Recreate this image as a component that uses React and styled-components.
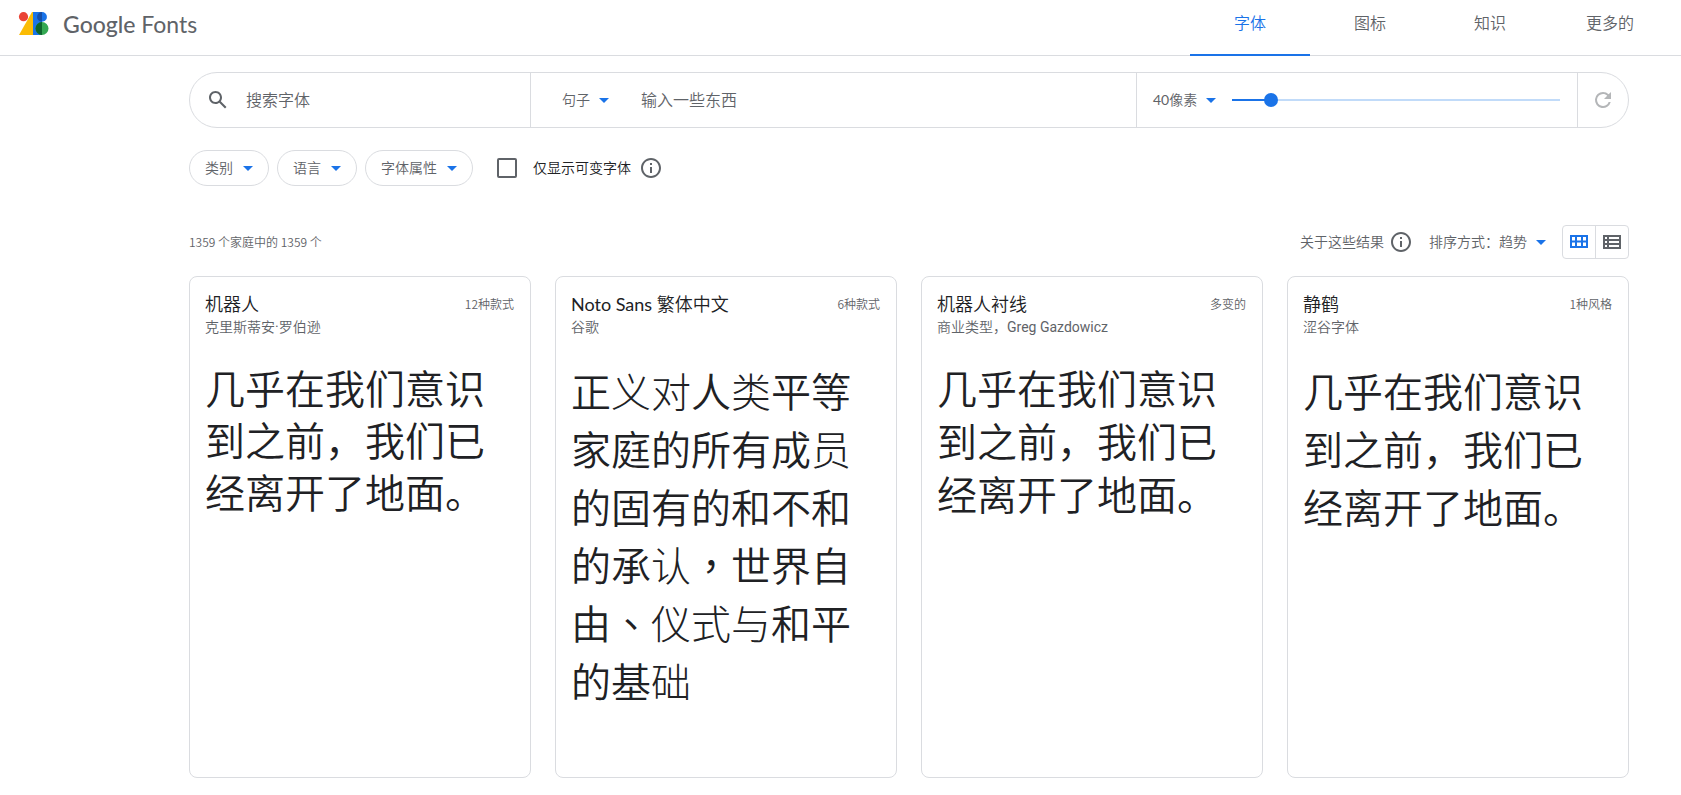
import React, { useState } from "react";
import styled, { createGlobalStyle, css } from "styled-components";

const GlobalStyle = createGlobalStyle`
* {
  box-sizing: border-box;
}
body {
  margin: 0;
  background: #fff;
  color: #202124;
  font-family: Lato, "Noto Sans CJK SC DemiLight", "Noto Sans CJK SC", sans-serif;
  font-size: 14px;
}
button, input {
  font-family: inherit;
}
`;

const Header = styled.header`
  display: flex;
  justify-content: space-between;
  height: 56px;
  padding: 0 11px 0 18px;
  border-bottom: 1px solid #dadce0;
`;

const Brand = styled.a`
  display: flex;
  align-items: center;
  gap: 14px;
  height: 48px;
  color: #5f6368;
  text-decoration: none;
`;

const BrandName = styled.span`
  font-size: 23px;
  line-height: 28px;

  b {
    font-weight: 500;
  }
`;

const Tabs = styled.nav`
  display: flex;
`;

const Tab = styled.a`
  width: 120px;
  height: 56px;
  padding-top: 11px;
  border-bottom: 2px solid transparent;
  color: #5f6368;
  font-size: 16px;
  font-weight: 350;
  line-height: 24px;
  text-align: center;
  text-decoration: none;

  ${props => props.$active && css`
    color: #1a73e8;
    border-bottom-color: #1a73e8;
  `}
`;

const Main = styled.main`
  padding: 16px 52px 17px 189px;
`;

const SearchBar = styled.form`
  display: flex;
  height: 56px;
  border: 1px solid #dadce0;
  border-radius: 28px;
`;

const Segment = styled.div`
  display: flex;
  align-items: center;
  flex: ${props => props.$flex || "1 1 0"};
  gap: ${props => props.$gap || 0}px;
  min-width: 0;
  padding: ${props => props.$pad};

  & + & {
    border-left: 1px solid #dadce0;
  }
`;

const TextInput = styled.input`
  flex: 1;
  min-width: 0;
  padding: 0;
  border: 0;
  outline: 0;
  background: none;
  color: #202124;
  font-size: 16px;
  font-weight: 350;
  line-height: 24px;

  &::placeholder {
    color: #5f6368;
    opacity: 1;
  }
`;

const PlainButton = styled.button`
  display: flex;
  align-items: center;
  gap: 9px;
  flex: none;
  padding: 0;
  border: 0;
  background: none;
  color: #5f6368;
  font-size: 14px;
  font-weight: 350;
  line-height: 20px;
  cursor: pointer;
`;

const SizeButton = styled(PlainButton)`
  font-weight: 400;
`;

const Chip = styled(PlainButton)`
  gap: 10px;
  height: 36px;
  padding: 0 15px;
  border: 1px solid #dadce0;
  border-radius: 18px;
`;

const Slider = styled.input`
  flex: 1;
  min-width: 0;
  height: 14px;
  margin: 0;
  appearance: none;
  background: linear-gradient(#1a73e8, #1a73e8) 0 6px / var(--fill) 2px no-repeat,
    linear-gradient(#c1dbf9, #c1dbf9) 0 6px / 100% 2px no-repeat;

  &::-webkit-slider-thumb {
    appearance: none;
    width: 14px;
    height: 14px;
    border-radius: 50%;
    background: #1a73e8;
  }
`;

const ResetButton = styled(PlainButton)`
  justify-content: center;
  width: 51px;
  border-left: 1px solid #dadce0;
  color: #b4b6b8;
`;

const Filters = styled.div`
  display: flex;
  align-items: center;
  gap: 8px;
  margin-top: 22px;
`;

const CheckLabel = styled.label`
  display: flex;
  align-items: center;
  gap: 16px;
  margin-left: 16px;
  color: #202124;
  font-weight: 350;
  line-height: 20px;
`;

const Checkbox = styled.input`
  width: 20px;
  height: 20px;
  margin: 0;
  appearance: none;
  border: 2px solid #5f6368;
  border-radius: 2px;

  &:checked {
    background: #1a73e8;
    border-color: #1a73e8;
  }
`;

const ResultsBar = styled.div`
  display: flex;
  align-items: center;
  justify-content: space-between;
  margin-top: 39px;
  color: #5f6368;
  font-weight: 350;
`;

const Count = styled.span`
  font-family: "Noto Sans CJK SC", sans-serif;
  font-size: 12px;
  line-height: 16px;
`;

const ResultsTools = styled.div`
  display: flex;
  align-items: center;
  gap: 16px;
`;

const About = styled.div`
  display: flex;
  align-items: center;
  gap: 5px;
  line-height: 20px;
`;

const InfoButton = styled(PlainButton)`
  height: 24px;
`;

const ViewToggle = styled.div`
  display: flex;
  height: 34px;
  border: 1px solid #dadce0;
  border-radius: 4px;
`;

const ViewButton = styled(PlainButton)`
  justify-content: center;
  width: 32px;
  color: ${props => (props.$active ? "#1a73e8" : "#5f6368")};

  & + & {
    width: 33px;
    border-left: 1px solid #dadce0;
  }
`;

const Grid = styled.div`
  display: grid;
  grid-template-columns: repeat(4, 1fr);
  gap: 24px;
  margin-top: 17px;
`;

const Card = styled.article`
  min-height: 502px;
  padding: 15px 16px 15px 15px;
  border: 1px solid #dadce0;
  border-radius: 8px;
`;

const CardHead = styled.div`
  display: flex;
  align-items: center;
  justify-content: space-between;
  height: 24px;
`;

const FontName = styled.h2`
  margin: 0;
  font-size: 18px;
  font-weight: 400;
  line-height: 24px;
`;

const Styles = styled.span`
  color: #5f6368;
  font-family: "Noto Sans CJK SC", sans-serif;
  font-size: 12px;
  font-weight: 350;
  line-height: 16px;
`;

const Designer = styled.div`
  margin-top: 1px;
  color: #5f6368;
  font-family: Roboto, "Noto Sans CJK SC DemiLight", "Noto Sans CJK SC", sans-serif;
  font-size: 14px;
  line-height: 20px;
`;

const Sample = styled.p`
  margin: 24px 0 0;
  font-family: "Noto Sans CJK ${props => props.$script || "SC"}", sans-serif;
  font-size: 40px;
  font-weight: 350;
  line-height: ${props => props.$leading}px;
`;

const Thin = styled.span`
  font-family: "Noto Sans CJK SC", sans-serif;
  font-weight: 300;
`;

const Icon = ({ d, size = 24 }) => (
  <svg width={size} height={size} viewBox="0 0 24 24" fill="currentColor" aria-hidden="true">
    <path d={d} />
  </svg>
);

const Arrow = () => (
  <svg width="10" height="5" viewBox="0 0 10 5" fill="#1a73e8" aria-hidden="true">
    <path d="M0 0h10L5 5z" />
  </svg>
);

const SEARCH = "M20.49 19l-5.73-5.73C15.53 12.2 16 10.91 16 9.5 16 5.91 13.09 3 9.5 3S3 5.91 3 9.5 5.91 16 9.5 16c1.41 0 2.7-.47 3.77-1.24L19 20.49 20.49 19zM5 9.5C5 7.01 7.01 5 9.5 5S14 7.01 14 9.5 11.99 14 9.5 14 5 11.99 5 9.5z";
const REFRESH = "M17.65 6.35A7.96 7.96 0 0 0 12 4a8 8 0 1 0 7.73 10h-2.08A6 6 0 1 1 12 6c1.66 0 3.14.69 4.22 1.78L13 11h7V4l-2.35 2.35z";
const INFO = "M11 7h2v2h-2zm0 4h2v6h-2zm1-9C6.48 2 2 6.48 2 12s4.48 10 10 10 10-4.48 10-10S17.52 2 12 2zm0 18c-4.41 0-8-3.59-8-8s3.59-8 8-8 8 3.59 8 8-3.59 8-8 8z";
const GRID = "M3 5v13h18V5H3zm5 2v3.5H5V7h3zm-3 9v-3.5h3V16H5zm5 0v-3.5h4V16h-4zm9 0h-3v-3.5h3V16zm-3-5.5V7h3v3.5h-3zM14 7v3.5h-4V7h4z";
const LIST = "M3 5v14h18V5H3zm4 2v2H5V7h2zm-2 6v-2h2v2H5zm0 2h2v2H5v-2zm14 2H9v-2h10v2zm0-4H9v-2h10v2zm0-4H9V7h10v2z";

const Logo = () => (
  <svg width="31" height="24" viewBox="0 0 31 24" aria-hidden="true">
    <path d="M14 0h1v23H1z" fill="#fbbc04" />
    <circle cx="5.5" cy="4.7" r="4.6" fill="#ea4335" />
    <path d="M15 0h9v23h-9z" fill="#1a73e8" />
    <circle cx="24" cy="4.9" r="4.9" fill="#1a73e8" />
    <path d="M24 0a4.9 4.9 0 0 0 0 9.8z" fill="#174ea6" />
    <circle cx="24" cy="16.5" r="6.5" fill="#34a853" />
    <path d="M24 10a6.5 6.5 0 0 0 0 13z" fill="#0d652d" />
  </svg>
);

const pangram = [{ text: "几乎在我们意识到之前，我们已经离开了地面。" }];

// simplified-only characters fall back to a thinner face
const declaration = [
  { text: "正" },
  { text: "义对", thin: true },
  { text: "人" },
  { text: "类", thin: true },
  { text: "平等" },
  { text: "家庭的所有成" },
  { text: "员", thin: true },
  { text: "的固有的和不和" },
  { text: "的承" },
  { text: "认", thin: true },
  { text: "，世界自" },
  { text: "由、" },
  { text: "仪式与", thin: true },
  { text: "和平" },
  { text: "的基" },
  { text: "础", thin: true },
];

const fonts = [
  { name: "机器人", designer: "克里斯蒂安·罗伯逊", styles: "12种款式", leading: 52, sample: pangram },
  { name: "Noto Sans 繁体中文", designer: "谷歌", styles: "6种款式", leading: 58, script: "TC", sample: declaration },
  { name: "机器人衬线", designer: "商业类型，Greg Gazdowicz", styles: "多变的", leading: 53, sample: pangram },
  { name: "静鹤", designer: "涩谷字体", styles: "1种风格", leading: 58, sample: pangram },
];

const tabs = ["字体", "图标", "知识", "更多的"];
const filters = ["类别", "语言", "字体属性"];

const MIN_SIZE = 8;
const MAX_SIZE = 320;

const App = () => {
  const [size, setSize] = useState(40);
  const [view, setView] = useState("grid");
  const fill = ((size - MIN_SIZE) / (MAX_SIZE - MIN_SIZE)) * 100 + "%";

  return (
    <>
      <GlobalStyle />
      <Header>
        <Brand href="#">
          <Logo />
          <BrandName><b>Google</b> Fonts</BrandName>
        </Brand>
        <Tabs>
          {tabs.map((tab, i) => (
            <Tab key={tab} href="#" $active={i === 0}>{tab}</Tab>
          ))}
        </Tabs>
      </Header>
      <Main>
        <SearchBar onSubmit={e => e.preventDefault()}>
          <Segment $flex="0 1 340px" $pad="0 16px" $gap={16}>
            <PlainButton type="button" aria-label="搜索"><Icon d={SEARCH} /></PlainButton>
            <TextInput placeholder="搜索字体" aria-label="搜索字体" />
          </Segment>
          <Segment $pad="0 16px 0 31px" $gap={32}>
            <PlainButton type="button">句子<Arrow /></PlainButton>
            <TextInput placeholder="输入一些东西" aria-label="输入一些东西" />
          </Segment>
          <Segment $flex="0 1 441px" $pad="0 17px 0 16px" $gap={16}>
            <SizeButton type="button">{size}像素<Arrow /></SizeButton>
            <Slider
              type="range"
              min={MIN_SIZE}
              max={MAX_SIZE}
              value={size}
              onChange={e => setSize(Number(e.target.value))}
              aria-label="字体大小"
              style={{ "--fill": fill }}
            />
          </Segment>
          <ResetButton type="reset" aria-label="重置"><Icon d={REFRESH} /></ResetButton>
        </SearchBar>
        <Filters>
          {filters.map(filter => (
            <Chip key={filter} type="button">{filter}<Arrow /></Chip>
          ))}
          <CheckLabel>
            <Checkbox type="checkbox" />
            仅显示可变字体
          </CheckLabel>
          <InfoButton type="button" aria-label="可变字体"><Icon d={INFO} /></InfoButton>
        </Filters>
        <ResultsBar>
          <Count>1359 个家庭中的 1359 个</Count>
          <ResultsTools>
            <About>
              关于这些结果
              <InfoButton type="button" aria-label="关于这些结果"><Icon d={INFO} /></InfoButton>
            </About>
            <PlainButton type="button">排序方式：趋势<Arrow /></PlainButton>
            <ViewToggle>
              <ViewButton $active={view === "grid"} onClick={() => setView("grid")} aria-label="网格"><Icon d={GRID} /></ViewButton>
              <ViewButton $active={view === "list"} onClick={() => setView("list")} aria-label="列表"><Icon d={LIST} /></ViewButton>
            </ViewToggle>
          </ResultsTools>
        </ResultsBar>
        <Grid>
          {fonts.map(font => (
            <Card key={font.name}>
              <CardHead>
                <FontName>{font.name}</FontName>
                <Styles>{font.styles}</Styles>
              </CardHead>
              <Designer>{font.designer}</Designer>
              <Sample $leading={font.leading} $script={font.script}>
                {font.sample.map(({ text, thin }) =>
                  thin ? <Thin key={text}>{text}</Thin> : <span key={text}>{text}</span>
                )}
              </Sample>
            </Card>
          ))}
        </Grid>
      </Main>
    </>
  );
};

export default App;
